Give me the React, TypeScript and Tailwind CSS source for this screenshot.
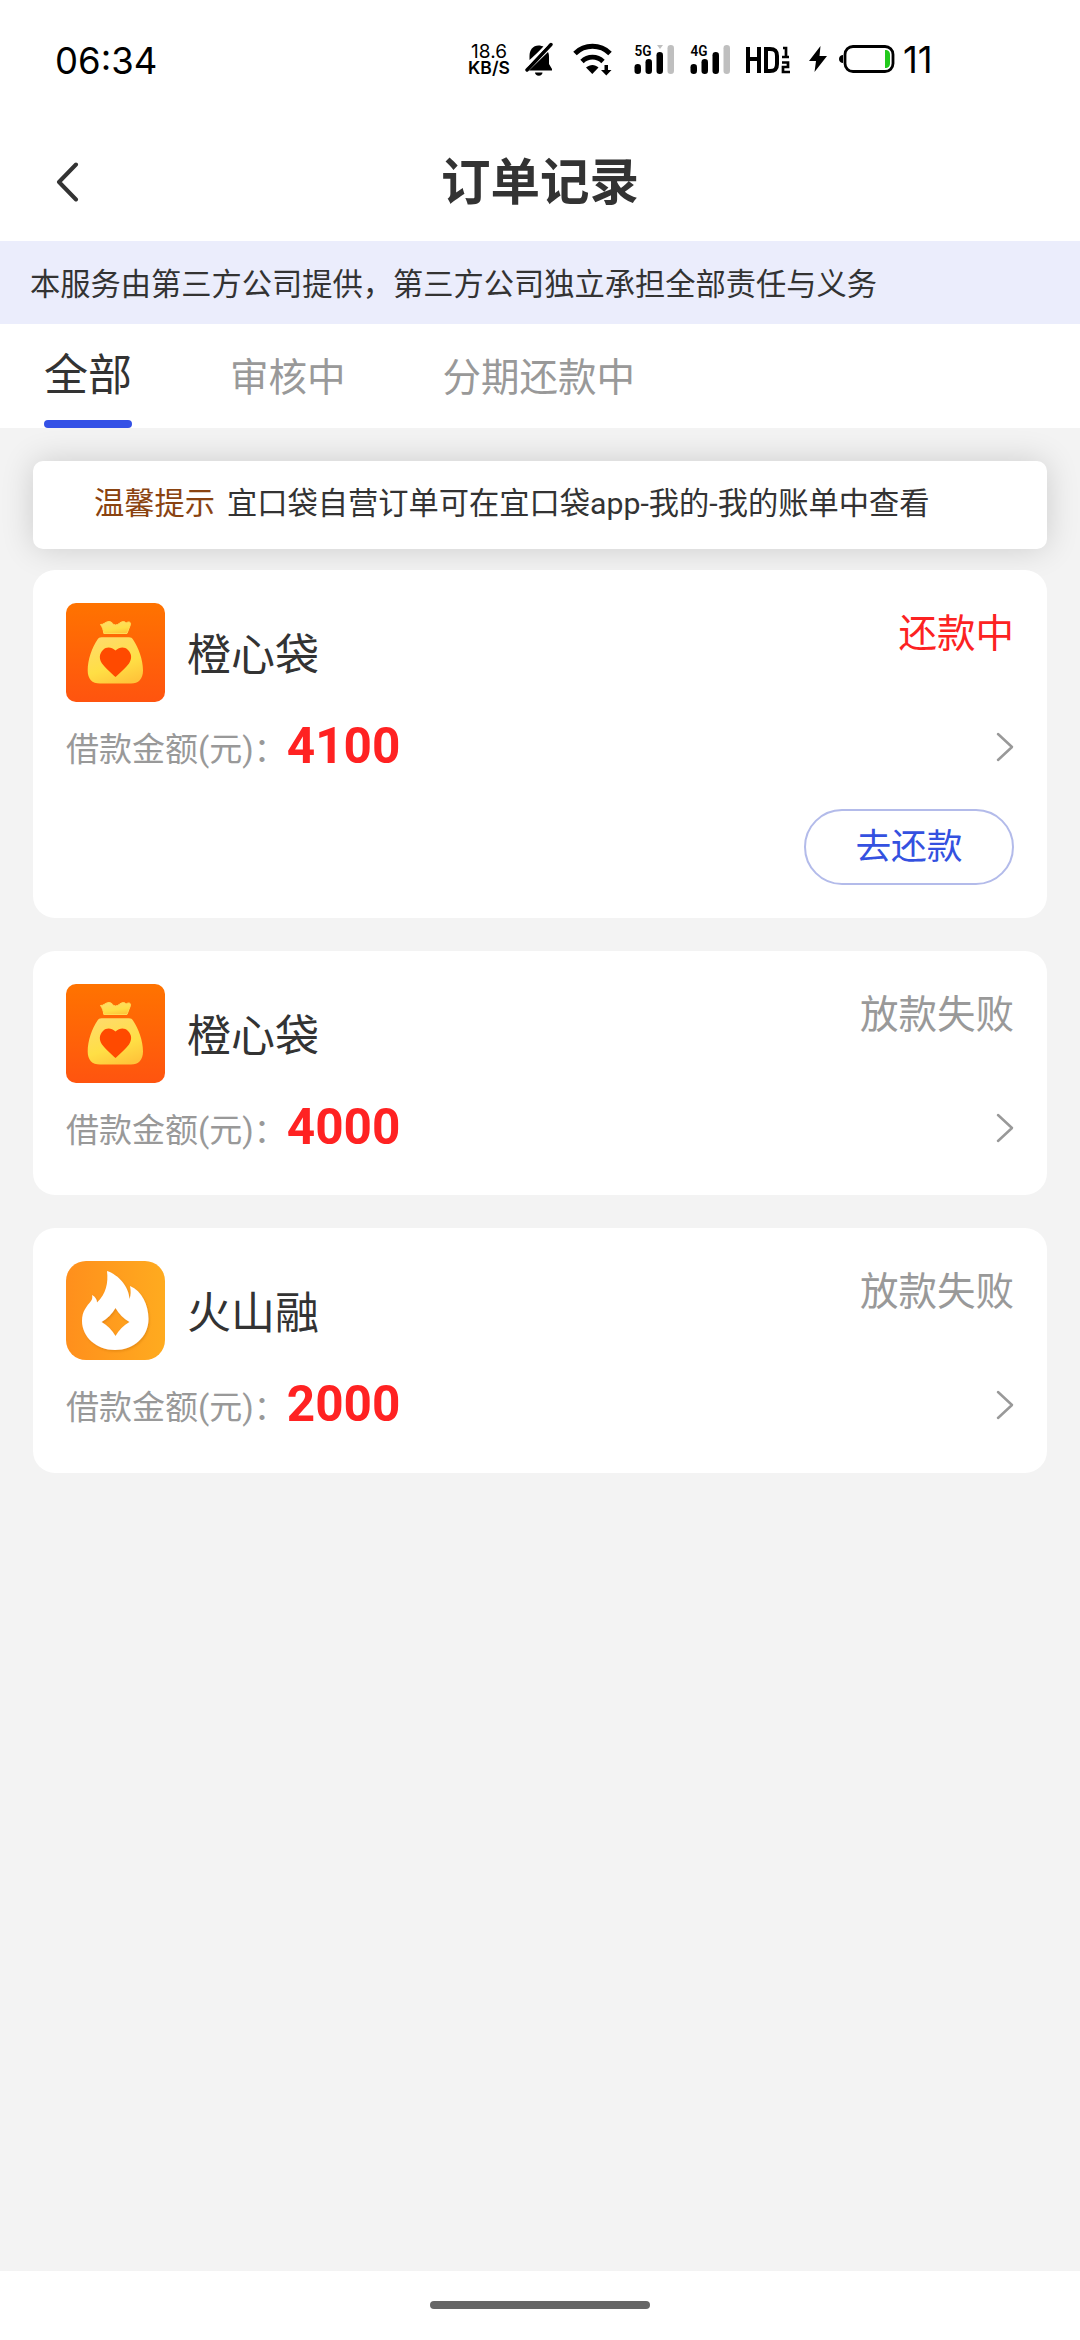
import React from "react";

const CJK = "font-['Roboto','Noto_Sans_CJK_SC',sans-serif]";

function BagIcon() {
  return (
    <svg viewBox="0 0 99 99" className="size-[99px] shrink-0">
      <defs>
        <linearGradient id="bagBg" x1="0" y1="0" x2="0" y2="1">
          <stop offset="0" stopColor="#ff7300" />
          <stop offset="1" stopColor="#ff540f" />
        </linearGradient>
        <linearGradient id="bagFill" x1="0.3" y1="0" x2="0.7" y2="1">
          <stop offset="0" stopColor="#ffdb68" />
          <stop offset="0.6" stopColor="#ffdf45" />
          <stop offset="1" stopColor="#ffc43a" />
        </linearGradient>
      </defs>
      <rect width="99" height="99" rx="10" fill="url(#bagBg)" />
      <path d="M34.500 21.500c3 .5 5-3 8.500-3 3.500 0 3.500 3.500 6.500 3.500s5-3.500 8-3.500c1.500 0 2 1.500 3 1.200 2.500-1.500 4.500-.5 4 1.800L61 30.500H37.800c-.5-4-1.500-6.500-3.300-9z" fill="url(#bagFill)" stroke="#ffdc55" strokeWidth="1" strokeLinejoin="round" />
      <path d="M35.500 34.200h27.500c2 0 3 .8 4 2.300 5.500 8 10 20 10 31 0 8.500-4.500 13-12 13H34c-8 0-12.300-4.500-12.300-13 0-11 4.300-23 9.800-31 1-1.500 2-2.300 4-2.300z" fill="url(#bagFill)" />
      <path d="M49.500 47.500c-4-3.500-9-4-12.500-.5-4 4-4 9-1 13.500 3 4 9 9.500 13.500 13.500 4.500-4 10.500-9.500 13.500-13.500 3-4.500 3-9.500-1-13.500-3.500-3.500-8.500-3-12.500.5z" fill="#ff4a00" />
    </svg>
  );
}

function FlameIcon() {
  return (
    <svg viewBox="0 0 99 99" className="size-[99px] shrink-0">
      <defs>
        <linearGradient id="flameBg" x1="0" y1="0" x2="1" y2="0">
          <stop offset="0" stopColor="#ff8f1c" />
          <stop offset="1" stopColor="#ffab1f" />
        </linearGradient>
        <filter id="flameShadow" x="-20%" y="-20%" width="140%" height="140%">
          <feDropShadow dx="1" dy="1.500" stdDeviation="1" floodColor="#c46a00" floodOpacity="0.4" />
        </filter>
      </defs>
      <rect width="99" height="99" rx="20" fill="url(#flameBg)" />
      <path
        filter="url(#flameShadow)"
        fillRule="evenodd"
        d="M41 10c12 4 22 16 22.500 28 1.500-4 1.500-8 .5-13 12 5 18.500 19 18.500 33 0 18-15 31-33.500 31S16 76 16 60c0-10 5-15 9-20 1.500-2 1.500-4 1-6 3.500 2 5 4.500 5 7.500C40 33 42.500 22 41 10zM49.500 47c-3.500 6-8 10.500-14 14 6 3.500 10.500 8 14 14 3.500-6 8-10.500 14-14-6-3.500-10.500-8-14-14z"
        fill="#fff"
      />
    </svg>
  );
}

function SignalBars({ label }: { label: string }) {
  return (
    <svg viewBox="0 0 42 34" className="h-[34px] w-[42px] shrink-0">
      <text x="0.500" y="14" fontFamily="Roboto" fontWeight="600" fontSize="15" textLength="17" lengthAdjust="spacingAndGlyphs">
        {label}
      </text>
      <rect x="0.500" y="22" width="6.500" height="10" rx="3.200" />
      <rect x="11.500" y="17" width="6.500" height="15" rx="3.200" />
      <rect x="22.500" y="10" width="6.500" height="22" rx="3.200" />
      <rect x="33.500" y="3" width="6.500" height="29" rx="3.200" fill="#bfbfbf" />
      {label === "5G" && <path d="M23 3h6l-3 4z" fill="#bfbfbf" />}
    </svg>
  );
}

function StatusBar() {
  return (
    <div className="mb-[4px] flex h-[118px] shrink-0 items-center pl-[55px] text-black font-['Inter',sans-serif]">
      <span className="w-[412px] pt-[3px] text-[36.500px] leading-[44px]">06:34</span>
      <div className="flex w-[44px] flex-col items-center pt-[2px]">
        <span className="text-[19px] leading-[16px]">18.6</span>
        <span className="text-[17.500px] leading-[16px] font-semibold">KB/S</span>
      </div>
      <svg viewBox="0 0 28 34" className="ml-[14px] h-[34px] w-[28px]">
        <path d="M4.500 18V14C4.500 8 8 3.500 13.500 3.500c2 0 4 .5 5.500 1.500z" />
        <path d="M23 10c.8 1.500 1 3 1 5v7l3 5v1.500H4z" />
        <path d="M26 2.500 2 28" stroke="#000" strokeWidth="3.400" strokeLinecap="round" />
        <path d="M21.800 2.500 1.800 23.700" stroke="#fff" strokeWidth="2.200" />
        <path d="M10 30.500h7.500c0 2-1.500 3.200-3.700 3.200S10 32.500 10 30.500z" />
      </svg>
      <svg viewBox="0 0 40 34" className="ml-[20px] h-[34px] w-[40px]">
        <path d="M2 11.500a25 25 0 0 1 35 0" fill="none" stroke="#000" strokeWidth="5" />
        <path d="M9 19.500a15 15 0 0 1 21 0" fill="none" stroke="#000" strokeWidth="4.800" />
        <path d="M13 25.500c4-3.500 9-3.500 12.500 0L19.300 32z" />
        <path d="M31.500 23h3.500v5h3.500L33.300 33.500 28 28h3.500z" />
      </svg>
      <div className="ml-[21px] flex gap-[14px]">
        <SignalBars label="5G" />
        <SignalBars label="4G" />
      </div>
      <svg viewBox="0 0 46 34" className="ml-[13px] h-[34px] w-[46px]">
        <g fill="none" stroke="#000">
          <path d="M3 5v26M14 5v26M3 17h11" strokeWidth="4" />
          <path d="M21 7h4c5 0 7 2 7 7v8c0 5-2 7-7 7h-4z" strokeWidth="4" />
          <path d="M38 6h3v9M37 15h7M37 20.500h6v4.500h-5v5h7" strokeWidth="2.700" />
        </g>
      </svg>
      <svg viewBox="0 0 18 28" className="ml-[18px] h-[28px] w-[18px]">
        <path d="M11.500 1 0 16h7L5.500 27 18 11h-7.500z" />
      </svg>
      <svg viewBox="0 0 56 30" className="ml-[12px] h-[30px] w-[56px]">
        <path d="M4 11v8c-2 0-4-1.500-4-4s2-4 4-4z" />
        <rect x="6" y="2.500" width="48" height="25" rx="8" fill="none" stroke="#000" strokeWidth="2.800" />
        <path d="M46 6c3.500 0 5 1.500 5 5v8c0 3.500-1.500 5-5 5z" fill="#22c91c" />
      </svg>
      <span className="ml-[8px] pt-[2px] text-[36.500px] leading-[44px]">11</span>
    </div>
  );
}

type Order = { name: string; amount: string; status: string; icon: "bag" | "flame"; active?: boolean };

const orders: Order[] = [
  { name: "橙心袋", amount: "4100", status: "还款中", icon: "bag", active: true },
  { name: "橙心袋", amount: "4000", status: "放款失败", icon: "bag" },
  { name: "火山融", amount: "2000", status: "放款失败", icon: "flame" },
];

function OrderCard({ order }: { order: Order }) {
  return (
    <section className={`flex flex-col rounded-[22px] bg-white px-[33px] pt-[33px] ${order.active ? "h-[348px]" : "h-[244.400px]"}`}>
      <div className="flex h-[99px]">
        {order.icon === "bag" ? <BagIcon /> : <FlameIcon />}
        <h2 className="ml-[22px] self-center pt-[7px] text-[44px] leading-[64px] text-[#333]">{order.name}</h2>
        <span className={`ml-auto pt-[3px] text-[38.500px] leading-[56px] ${order.active ? "text-[#fc2222]" : "text-[#999]"}`}>{order.status}</span>
      </div>
      <div className="mt-[12px] flex h-[66px] items-center">
        <span className="pt-[5px] text-[33px] leading-[48px] text-[#999]">借款金额(元)：</span>
        <span className="pb-[2px] text-[49.500px] leading-[58px] font-bold text-[#ff2222]">{order.amount}</span>
        <svg viewBox="0 0 18 30" className="ml-auto h-[30px] w-[18px]" fill="none" stroke="#999" strokeWidth="2.500" strokeLinecap="round" strokeLinejoin="round">
          <path d="M2 2l14 13L2 28" />
        </svg>
      </div>
      {order.active && (
        <button className="mt-[29px] h-[76px] w-[210px] self-end rounded-full border-2 border-[#b3bbea] pb-[1px] text-[35.750px] leading-[52px] text-[#3451e0]">
          去还款
        </button>
      )}
    </section>
  );
}

export default function App() {
  return (
    <div className={`flex h-[2340px] w-[1080px] flex-col overflow-hidden bg-[#f3f3f3] ${CJK}`}>
      <div className="bg-white">
        <StatusBar />
        <header className="grid h-[119px] grid-cols-[1fr_auto_1fr] items-center px-[56px]">
          <svg viewBox="0 0 23 40" className="h-[40px] w-[23px]" fill="none" stroke="#333" strokeWidth="4" strokeLinecap="round" strokeLinejoin="round">
            <path d="M20 2.500 3 20l17 17.500" />
          </svg>
          <h1 className="pt-[3px] text-[49.500px] leading-[72px] font-bold text-[#333]">订单记录</h1>
        </header>
      </div>
      <p className="flex h-[83px] shrink-0 items-center bg-[#ebedfc] pt-[4px] pl-[30px] text-[30.250px] text-[#333]">
        本服务由第三方公司提供，第三方公司独立承担全部责任与义务
      </p>
      <nav className="flex h-[104px] shrink-0 bg-white pl-[44px] text-[38.500px] text-[#999]">
        <div className="flex h-full flex-col justify-between text-[44px] text-[#333]">
          <span className="pt-[20px] leading-[64px]">全部</span>
          <span className="h-[8px] rounded-[4px] bg-[#3451e6]" />
        </div>
        <span className="ml-[98px] pt-[26px] leading-[56px]">审核中</span>
        <span className="ml-[97px] pt-[26px] leading-[56px]">分期还款中</span>
      </nav>
      <main className="flex flex-1 flex-col overflow-hidden px-[33px] pt-[33px]">
        <div className="flex h-[88px] shrink-0 items-center rounded-[10px] bg-white pb-[2px] pl-[61px] text-[30.250px] text-[#333] shadow-[0_0_33px_rgba(0,0,0,0.16)]">
          <span className="mr-[12px] text-[#8a4310]">温馨提示</span>
          <span>宜口袋自营订单可在宜口袋app-我的-我的账单中查看</span>
        </div>
        <div className="relative mt-[21px] flex flex-col gap-[33px]">
          {orders.map((o, i) => (
            <OrderCard key={i} order={o} />
          ))}
        </div>
      </main>
      <footer className="flex h-[69px] shrink-0 justify-center bg-white pt-[30px]">
        <div className="h-[8px] w-[220px] rounded-full bg-[#666]" />
      </footer>
    </div>
  );
}
